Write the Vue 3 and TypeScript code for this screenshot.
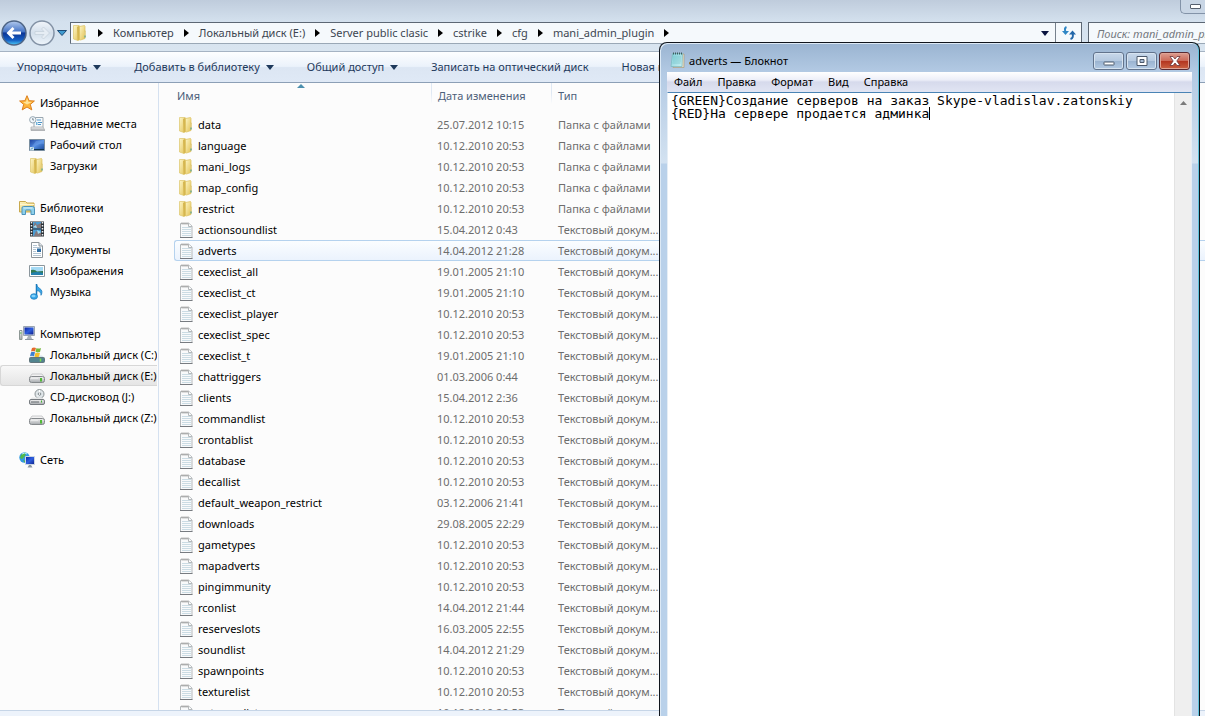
<script setup lang="ts">
import { computed, ref } from 'vue'

interface NavItem { label: string; icon: string; current?: boolean }
interface NavGroup extends NavItem { children: NavItem[] }
interface FileRow { name: string; date: string; folder?: boolean }

const crumbs = ['Компьютер', 'Локальный диск (E:)', 'Server public clasic', 'cstrike', 'cfg', 'mani_admin_plugin']

const commands = [
  { label: 'Упорядочить', menu: true },
  { label: 'Добавить в библиотеку', menu: true },
  { label: 'Общий доступ', menu: true },
  { label: 'Записать на оптический диск', menu: false },
  { label: 'Новая папка', menu: false },
]

const groups: NavGroup[] = [
  {
    label: 'Избранное', icon: 'star', children: [
      { label: 'Недавние места', icon: 'recent' },
      { label: 'Рабочий стол', icon: 'desktop' },
      { label: 'Загрузки', icon: 'folder' },
    ],
  },
  {
    label: 'Библиотеки', icon: 'library', children: [
      { label: 'Видео', icon: 'video' },
      { label: 'Документы', icon: 'document' },
      { label: 'Изображения', icon: 'picture' },
      { label: 'Музыка', icon: 'music' },
    ],
  },
  {
    label: 'Компьютер', icon: 'computer', children: [
      { label: 'Локальный диск (C:)', icon: 'system' },
      { label: 'Локальный диск (E:)', icon: 'drive', current: true },
      { label: 'CD-дисковод (J:)', icon: 'cd' },
      { label: 'Локальный диск (Z:)', icon: 'drive' },
    ],
  },
  { label: 'Сеть', icon: 'network', children: [] },
]

const files: FileRow[] = [
  { name: 'data', date: '25.07.2012 10:15', folder: true },
  { name: 'language', date: '10.12.2010 20:53', folder: true },
  { name: 'mani_logs', date: '10.12.2010 20:53', folder: true },
  { name: 'map_config', date: '10.12.2010 20:53', folder: true },
  { name: 'restrict', date: '10.12.2010 20:53', folder: true },
  { name: 'actionsoundlist', date: '15.04.2012 0:43' },
  { name: 'adverts', date: '14.04.2012 21:28' },
  { name: 'cexeclist_all', date: '19.01.2005 21:10' },
  { name: 'cexeclist_ct', date: '19.01.2005 21:10' },
  { name: 'cexeclist_player', date: '10.12.2010 20:53' },
  { name: 'cexeclist_spec', date: '10.12.2010 20:53' },
  { name: 'cexeclist_t', date: '19.01.2005 21:10' },
  { name: 'chattriggers', date: '01.03.2006 0:44' },
  { name: 'clients', date: '15.04.2012 2:36' },
  { name: 'commandlist', date: '10.12.2010 20:53' },
  { name: 'crontablist', date: '10.12.2010 20:53' },
  { name: 'database', date: '10.12.2010 20:53' },
  { name: 'decallist', date: '10.12.2010 20:53' },
  { name: 'default_weapon_restrict', date: '03.12.2006 21:41' },
  { name: 'downloads', date: '29.08.2005 22:29' },
  { name: 'gametypes', date: '10.12.2010 20:53' },
  { name: 'mapadverts', date: '10.12.2010 20:53' },
  { name: 'pingimmunity', date: '10.12.2010 20:53' },
  { name: 'rconlist', date: '14.04.2012 21:44' },
  { name: 'reserveslots', date: '16.03.2005 22:55' },
  { name: 'soundlist', date: '14.04.2012 21:29' },
  { name: 'spawnpoints', date: '10.12.2010 20:53' },
  { name: 'texturelist', date: '10.12.2010 20:53' },
  { name: 'voterconlist', date: '10.12.2010 20:53' },
]

const selected = ref('adverts')
const search = ref('')
const menus = ['Файл', 'Правка', 'Формат', 'Вид', 'Справка']
const text = ref('{GREEN}Создание серверов на заказ Skype-vladislav.zatonskiy\n{RED}На сервере продается админка')

const caret = computed(() => {
  const lines = text.value.split('\n')
  return { left: `${lines[lines.length - 1].length}ch`, top: `${(lines.length - 1) * 13}px` }
})
</script>

<template>
  <div class="desktop">
    <svg class="defs" aria-hidden="true">
      <defs>
        <linearGradient id="gold" x1="0" x2="1" y1="0" y2="1">
          <stop offset="0" stop-color="#fdf5c4" /><stop offset="1" stop-color="#e2c256" />
        </linearGradient>
        <linearGradient id="screen" x1="0" x2="1" y1="0" y2="1">
          <stop offset="0" stop-color="#0a1f9c" /><stop offset=".5" stop-color="#2f5fe0" /><stop offset="1" stop-color="#0d1f88" />
        </linearGradient>
        <linearGradient id="desk" x1="0" x2="1" y1="0" y2="1">
          <stop offset="0" stop-color="#1c3f9c" /><stop offset=".5" stop-color="#4f8ae0" /><stop offset="1" stop-color="#1d4591" />
        </linearGradient>
        <linearGradient id="metal" x1="0" x2="0" y1="0" y2="1">
          <stop offset="0" stop-color="#f4f4f4" /><stop offset="1" stop-color="#a5a9ad" />
        </linearGradient>
        <linearGradient id="orb" x1="0" x2="0" y1="0" y2="1">
          <stop offset="0" stop-color="#b4cbee" /><stop offset=".45" stop-color="#4474c6" />
          <stop offset=".5" stop-color="#0b3596" /><stop offset=".8" stop-color="#1560c4" /><stop offset="1" stop-color="#4fd0fa" />
        </linearGradient>
        <linearGradient id="orb-off" x1="0" x2="0" y1="0" y2="1">
          <stop offset="0" stop-color="#f1f5fa" /><stop offset=".5" stop-color="#d3dfeb" /><stop offset="1" stop-color="#eef5fb" />
        </linearGradient>
        <linearGradient id="page" x1="0" x2="1" y1="0" y2="1">
          <stop offset="0" stop-color="#7ecfd8" /><stop offset="1" stop-color="#c9eff2" />
        </linearGradient>
      </defs>
      <symbol id="i-folder" viewBox="0 0 16 16">
        <path d="M1.500.500h5.500l1 1v13l-2 1-4.500-1.500z" fill="url(#gold)" stroke="#dcc56c" stroke-width=".7" />
        <path d="M5 2l2.500-1.500v14L5.500 15.500z" fill="#d5b650" />
        <path d="M7.500 1.500L12.500.500l.5 1v12l-4.500 1.500-1-.5z" fill="url(#gold)" stroke="#dcc05c" stroke-width=".7" />
        <path d="M12.500 6h1v6h-1z" fill="#f7f1ca" stroke="#cfb04a" stroke-width=".4" /><path d="M13 10.500v2" stroke="#3b9c9c" />
      </symbol>
      <symbol id="i-text" viewBox="0 0 16 16">
        <path d="M2.500 1.500h8.500l3 2.500v11.500H2.500z" fill="#f9fafb" stroke="#b3b8bb" />
        <path d="M4 5.500h9M4 7.500h9M4 9.500h9M4 11.500h9M4 13.500h9" stroke="#cbdce4" />
        <path d="M3 2.500l1-2 1 2 1-2 1 2 1-2 1 2 1-2 1 2" fill="none" stroke="#a9a9a9" stroke-width=".8" />
        <path d="M10.500 1.500v3H14" fill="#fff" stroke="#b5b9bb" /><path d="M2 15.500h12.500" stroke="#777b80" />
      </symbol>
      <symbol id="i-star" viewBox="0 0 16 16">
        <path d="M8 .700l2.100 5 5.300.300-4.100 3.400 1.500 5.500L8 12l-4.800 2.900 1.500-5.500L.600 6l5.300-.300z" fill="#fdb53a" stroke="#dc7f1e" />
        <path d="M8 3l1.300 3.700 3.700.300-5 2.500-4-2.500 3-.300z" fill="#ffe397" />
      </symbol>
      <symbol id="i-recent" viewBox="0 0 16 16">
        <path d="M6 1.500h8v10H5V6z" fill="#f7fafc" stroke="#9aa7b0" />
        <path d="M8 4h4M9 6.500h4M9 8.500h3" stroke="#4d94c8" /><path d="M7 6h1.500v3H7z" fill="#72b4dc" />
        <path d="M2 11h12l2 3.500H2z" fill="url(#metal)" stroke="#a5a8aa" stroke-width=".7" />
        <circle cx="3.800" cy="3.800" r="3.200" fill="#f1f6fa" stroke="#98a8b3" /><path d="M3.800 2v2H5" fill="none" stroke="#63737d" stroke-width=".8" />
      </symbol>
      <symbol id="i-desktop" viewBox="0 0 16 16">
        <path d="M.500 2.500h15v11H.500z" fill="url(#desk)" stroke="#7a8ea0" /><path d="M1 12l6-8 8-1v4c-5-1-9 1-12 6z" fill="#7aaaf0" opacity=".4" />
        <path d="M1 12.500h14" stroke="#0c3353" /><path d="M1 10h4v3.500H1z" fill="#d1e4ef" /><path d="M2 12.500l2-2" stroke="#287cac" />
      </symbol>
      <symbol id="i-library" viewBox="0 0 16 16">
        <path d="M.500 3V1.500h6L8 3h7v9H.500z" fill="url(#gold)" stroke="#c8a94e" /><path d="M1 4.500h14" stroke="#fff6cf" />
        <path d="M3 14.500V8q0-1.500 1.500-1.500h9Q15.500 6.500 15.500 8.500v6H12V11q0-1-1-1H7.500q-1 0-1 1v3.500z" fill="#8fd0ea" stroke="#4c93bb" />
        <path d="M4.500 8h9" stroke="#d9f3fb" />
      </symbol>
      <symbol id="i-video" viewBox="0 0 16 16">
        <path d="M1 .500h14v15H1z" fill="#2b3137" /><path d="M4 1h8v6.500H4zM4 8.500h8V15H4z" fill="#4b9cd3" />
        <path d="M6 1l2 3 4-2v5H8L4 6zM5 15l2-5 5 2v3z" fill="#9c6a57" opacity=".7" /><path d="M4 6l3-2 1 3zM8 9l4 2-3 2z" fill="#9fddf5" />
        <path d="M2.500 1v15M13.500 1v15" stroke="#eef1f3" stroke-width="1.500" stroke-dasharray="1.500 1.500" />
      </symbol>
      <symbol id="i-document" viewBox="0 0 16 16">
        <path d="M2.500.500H10L13.500 4v11.500h-11z" fill="#fff" stroke="#8d9499" /><path d="M10 .500V4h3.500" fill="#dce4ea" stroke="#8d9499" />
        <path d="M4 3.500h4M4 5.500h8M4 7.500h3M4 9.500h3M4 11.500h8M4 13.500h8" stroke="#a1b6c7" stroke-width=".8" /><path d="M8 6.500h4V10H8z" fill="#2e6da4" />
      </symbol>
      <symbol id="i-picture" viewBox="0 0 16 16">
        <path d="M.500 2.500h15v11H.500z" fill="#fff" stroke="#8b969d" /><path d="M2 4h12v8H2z" fill="#a5daf5" />
        <path d="M2 7q4-1 6 1.500l6-.5v2H2z" fill="#327a53" /><path d="M2 10q6-2 12 0v2H2z" fill="#2380ad" />
      </symbol>
      <symbol id="i-music" viewBox="0 0 16 16">
        <path d="M7.500 0v11.500" stroke="#1776b8" stroke-width="1.500" />
        <path d="M7.500.300q.5 2.500 3 4 4 2.500 1.500 7 .3-4-4.500-4.800z" fill="#37a6e8" stroke="#1776b8" stroke-width=".7" />
        <ellipse cx="5" cy="12.500" rx="3.500" ry="2.800" fill="#37a6e8" stroke="#1776b8" stroke-width=".7" /><ellipse cx="4.500" cy="12" rx="2" ry="1.200" fill="#83d1fb" />
      </symbol>
      <symbol id="i-computer" viewBox="0 0 16 16">
        <path d="M.500 4.500H3v9H.500z" fill="url(#metal)" stroke="#8d9794" /><path d="M1 7h1.500" stroke="#4db84b" />
        <path d="M4.500.500h11v9h-11z" fill="#d7dde4" stroke="#9aa5b1" /><path d="M5.500 1.500h9v7h-9z" fill="url(#screen)" />
        <path d="M9 10h3l1 3H7.500z" fill="#aab2bb" /><path d="M6 13.500h8.500" stroke="#8d969f" />
      </symbol>
      <symbol id="i-drive" viewBox="0 0 16 16">
        <path d="M3 6h10l2.500 3.500H.500z" fill="#f2f2f2" stroke="#c0c2c4" stroke-width=".8" />
        <rect x=".500" y="8.500" width="15" height="6" rx="2" fill="url(#metal)" stroke="#85898c" /><path d="M11 10h2v3.500h-2z" fill="#52bb38" />
        <path d="M2 10.500h7" stroke="#e9eaeb" />
      </symbol>
      <symbol id="i-system" viewBox="0 0 16 16">
        <path d="M3 8.500h10l2.500 2.500H.500z" fill="#d6e6eb" /><rect x=".500" y="10.500" width="15" height="5" rx="1" fill="#52848f" stroke="#61757c" />
        <path d="M11.500 11.500v3" stroke="#79dc4b" stroke-width="1.500" />
        <path d="M3 1q2-1 4 0L6 4.500Q4 3.500 2 4.500z" fill="#e56a2c" /><path d="M7.500 1q2 1 4.500 0l-1 4q-2.500 1-4.500-.200z" fill="#76b83b" />
        <path d="M2 5.300q2-1 4 0l-1 4q-2-1-4 0z" fill="#3b7fd1" /><path d="M6.500 5.500q2 1 4.500.200l-1 4q-2.500.700-4.500-.300z" fill="#f4bd2b" />
      </symbol>
      <symbol id="i-cd" viewBox="0 0 16 16">
        <circle cx="10.500" cy="5" r="4.500" fill="#dfe5e8" stroke="#8d9497" /><circle cx="10.500" cy="5" r="1.300" fill="#fff" stroke="#828b8f" />
        <path d="M10.500 1v2.500M8 7.500l1.500-1.500" stroke="#fff" /><path d="M3 8.500h10l2.500 2.500H.500z" fill="#e6e7e8" />
        <rect x=".500" y="10.500" width="15" height="5" rx="1.500" fill="url(#metal)" stroke="#777c80" /><path d="M2 13h8" stroke="#666c70" /><path d="M12.500 11.500v2" stroke="#45b234" />
      </symbol>
      <symbol id="i-network" viewBox="0 0 16 16">
        <circle cx="5.500" cy="5.500" r="5.200" fill="#329ae3" /><path d="M2 3q3-3 5-2L6 4 3 7 1 6zM4 8l3 1-1 2z" fill="#52b848" /><path d="M3 2q3-2 5 0" stroke="#b9f0fa" fill="none" />
        <path d="M6.500 4.500h9v8h-9z" fill="url(#screen)" stroke="#cdd7e2" /><path d="M10 13h2l1.500 2.500h-5z" fill="#8c98a3" />
      </symbol>
      <symbol id="i-notepad" viewBox="0 0 16 16">
        <path d="M3 2h11v13.500H3z" fill="#e5dfc8" stroke="#a99c80" stroke-width=".7" /><path d="M2.500 1.500h10L12 14.500H1z" fill="url(#page)" stroke="#79b7be" stroke-width=".7" />
        <path d="M3 5h8M3 7h8M3 9h8M2.500 11h8" stroke="#71bfc6" stroke-width=".6" /><path d="M3 1.500h10" stroke="#3d5b5f" stroke-width="2" stroke-dasharray="1 1" />
      </symbol>
    </svg>

    <header class="glass">
      <div class="caption"><button class="min-button" aria-label="Свернуть проводник"><i class="dash"></i></button></div>
      <div class="nav-row">
        <nav class="travel" aria-label="Переходы">
          <button class="round" aria-label="Назад">
            <svg viewBox="0 0 26 26"><circle cx="13" cy="13" r="12" fill="url(#orb)" stroke="#4e6585" stroke-width="1.500" /><path d="M5.500 13l6-6 2 2-2.500 2.500h9v3h-9l2.500 2.500-2 2z" fill="#fff" /></svg>
          </button>
          <button class="round" aria-label="Вперёд">
            <svg viewBox="0 0 26 26"><circle cx="13" cy="13" r="12" fill="url(#orb-off)" stroke="#8392a5" stroke-width="1.500" /><path d="M20.500 13l-6-6-2 2 2.500 2.500H6v3h9l-2.500 2.500 2 2z" fill="#e6edf4" stroke="#c3ced9" stroke-width=".7" /></svg>
          </button>
          <button class="recent" aria-label="Последние страницы"><svg viewBox="0 0 10 6"><path d="M.500.500h9L5 5.500z" fill="#3f9bd0" stroke="#1c4b75" /></svg></button>
        </nav>
        <div class="address">
          <svg class="icon"><use href="#i-folder" /></svg>
          <ol class="crumbs">
            <li v-for="crumb in crumbs" :key="crumb"><svg class="sep" viewBox="0 0 5 8"><path d="M0 0l5 4-5 4z" /></svg><a href="#">{{ crumb }}</a></li>
            <li><svg class="sep" viewBox="0 0 5 8"><path d="M0 0l5 4-5 4z" /></svg></li>
          </ol>
          <button class="history" aria-label="Предыдущие расположения"><svg viewBox="0 0 8 5"><path d="M0 0h8L4 5z" fill="#0a1440" /></svg></button>
          <button class="refresh" aria-label="Обновить">
            <svg viewBox="0 0 16 14"><path d="M5.500 1Q3 2 4.500 6" fill="none" stroke="#2f86c5" stroke-width="2" /><path d="M1 5h7l-3.500 4z" fill="#2f86c5" /><path d="M9.500 13q3.500-1 2-6" fill="none" stroke="#2367a9" stroke-width="2" /><path d="M8 8.500h7L11.500 4.500z" fill="#2367a9" /></svg>
          </button>
        </div>
        <input v-model="search" class="search" type="text" aria-label="Поиск" placeholder="Поиск: mani_admin_plugin">
      </div>
    </header>

    <div class="commands">
      <button v-for="command in commands" :key="command.label">
        {{ command.label }}<svg v-if="command.menu" viewBox="0 0 8 5"><path d="M0 0h8L4 5z" fill="#1e395b" /></svg>
      </button>
    </div>

    <div class="body">
      <aside class="sidebar">
        <ul v-for="group in groups" :key="group.label">
          <li><a href="#"><svg class="icon"><use :href="`#i-${group.icon}`" /></svg>{{ group.label }}</a></li>
          <li v-for="item in group.children" :key="item.label" class="child" :class="{ current: item.current }">
            <a href="#"><svg class="icon"><use :href="`#i-${item.icon}`" /></svg><span>{{ item.label }}</span></a>
          </li>
        </ul>
      </aside>
      <main class="listing">
        <svg class="sort" viewBox="0 0 8 4"><path d="M4 0l4 4H0z" fill="#4c8fae" /></svg>
        <table>
          <colgroup><col class="c-name"><col class="c-date"><col></colgroup>
          <thead><tr><th>Имя</th><th>Дата изменения</th><th>Тип</th></tr></thead>
          <tbody>
            <tr v-for="file in files" :key="file.name" :class="{ selected: file.name === selected }" @click="selected = file.name">
              <td><span class="name"><svg class="icon"><use :href="file.folder ? '#i-folder' : '#i-text'" /></svg>{{ file.name }}</span></td>
              <td>{{ file.date }}</td>
              <td>{{ file.folder ? 'Папка с файлами' : 'Текстовый докум...' }}</td>
            </tr>
          </tbody>
        </table>
      </main>
    </div>
    <footer class="details"></footer>

    <section class="notepad" aria-label="Блокнот">
      <div class="title">
        <svg class="icon"><use href="#i-notepad" /></svg>
        <h1>adverts — Блокнот</h1>
        <div class="buttons">
          <button aria-label="Свернуть"><svg viewBox="0 0 12 10"><rect x="1" y="6" width="10" height="3" rx=".500" fill="#fff" stroke="#4b586b" /></svg></button>
          <button aria-label="Развернуть"><svg viewBox="0 0 12 10"><path d="M1 .500h10v9H1z" fill="#fff" stroke="#4b586b" /><path d="M4 3.500h4v3H4z" fill="#a9bdd6" stroke="#4b586b" /></svg></button>
          <button class="close" aria-label="Закрыть"><svg viewBox="0 0 12 10"><path d="M1 .500h3l2 2.500 2-2.500h3L7.800 5 11 9.500H8L6 7 4 9.500H1L4.200 5z" fill="#fff" stroke="#69343a" stroke-width=".8" /></svg></button>
        </div>
      </div>
      <div class="client">
        <div class="menubar"><button v-for="menu in menus" :key="menu">{{ menu }}</button></div>
        <div class="editor">
          <div class="paper">
            <textarea v-model="text" aria-label="Текст" spellcheck="false"></textarea>
            <div class="caret-layer"><i class="caret" :style="caret"></i></div>
          </div>
          <div class="scroll"><button aria-label="Вверх"><svg viewBox="0 0 7 4"><path d="M3.500 0L7 4H0z" fill="#7b7b7b" /></svg></button></div>
        </div>
      </div>
    </section>
  </div>
</template>

<style>
body { margin: 0; overflow: hidden; }
</style>

<style scoped>
.desktop {
  position: relative;
  display: flex;
  flex-direction: column;
  height: 100vh;
  overflow: hidden;
  background: #fcfcfc;
  color: #000;
  font: 11px/16px "Noto Sans", "Open Sans", sans-serif;
}
.desktop *, .desktop *::before { box-sizing: border-box; }
.defs { position: absolute; width: 0; height: 0; }
button { display: flex; align-items: center; margin: 0; padding: 0; border: 0; background: none; color: inherit; font: inherit; white-space: nowrap; }
a { color: inherit; text-decoration: none; }
ul, ol { margin: 0; padding: 0; list-style: none; }
.icon { flex: none; width: 16px; height: 16px; }

.glass { flex: none; background: linear-gradient(#bfccdc, #d4e1ee 22px, #d9e5f0); }
.caption { display: flex; justify-content: flex-end; height: 22px; }
.min-button { justify-content: center; width: 25px; height: 14px; padding-left: 4px; border: 1px solid #8393a8; border-width: 0 0 1px 1px; border-radius: 0 0 0 5px; background: #c9d6e5; }
.dash { width: 11px; height: 5px; border: 1px solid #555f6e; border-radius: 1px; background: #fff; }
.nav-row { display: flex; height: 29px; align-items: flex-start; }
.travel { display: flex; flex: none; align-items: center; gap: 2px; width: 70px; height: 22px; padding-left: 1px; }
.round svg { display: block; width: 26px; height: 26px; }
.recent svg { width: 10px; height: 6px; }
.address { display: flex; flex: 1; min-width: 0; height: 22px; border: 1px solid #5c6774; background: #f5f9fc; border-bottom-color: #9aa8b6; }
.address > .icon { margin: 2px 0 0 1px; }
.crumbs { display: flex; flex: 1; min-width: 0; align-items: center; overflow: hidden; color: #3c4550; white-space: nowrap; }
.crumbs li { display: flex; align-items: center; }
.sep { width: 5px; height: 8px; margin: 0 10px; }
.history { justify-content: center; width: 20px; }
.history svg { width: 8px; height: 5px; }
.refresh { justify-content: center; width: 26px; border-left: 1px solid #76818d; }
.refresh svg { width: 16px; height: 14px; }
.search { flex: none; width: 117px; height: 22px; margin-left: 6px; padding: 0 0 0 8px; border: 1px solid #5c6774; border-right: 0; border-bottom-color: #9aa8b6; border-radius: 0; outline: 0; background: #f5f9fc; color: #333; font: italic 11px/16px "Noto Sans", "Open Sans", sans-serif; }
.search::placeholder { color: #73777c; opacity: 1; }

.commands { display: flex; flex: none; gap: 33px; height: 32px; padding-left: 17px; overflow: hidden; border-top: 1px solid #a5b3c3; border-bottom: 1px solid #8c9fb6; background: linear-gradient(#fdfeff, #ebf2fb 48%, #dce6f3 52%, #dfe9f6); color: #1e395b; }
.commands svg { width: 8px; height: 5px; margin-left: 6px; }

.body { display: flex; flex: 1; min-height: 0; }
.sidebar { flex: none; width: 159px; padding-top: 9px; border-right: 1px solid #d5e1f0; overflow: hidden; }
.sidebar ul { margin-bottom: 21px; padding-right: 1px; }
.sidebar li { height: 21px; padding-left: 19px; overflow: hidden; white-space: nowrap; }
.sidebar .child { padding-left: 29px; }
.sidebar li a { display: flex; align-items: center; gap: 5px; height: 21px; }
.sidebar .current { padding-left: 28px; border: 1px solid #d7d7d7; border-right: 0; border-radius: 3px 0 0 3px; background: linear-gradient(#f8f8f8, #e5e5e5); }
.sidebar .current a { height: 19px; }

.listing { position: relative; flex: 1; min-width: 0; padding-left: 15px; overflow: hidden; }
.sort { position: absolute; top: 1px; left: 138px; width: 8px; height: 4px; }
table { width: 100%; table-layout: fixed; border-collapse: separate; border-spacing: 0; }
.c-name { width: 257px; }
.c-date { width: 120px; }
th { height: 31px; padding: 0 0 5px 7px; color: #4c607a; font-weight: 400; text-align: left; background: linear-gradient(#dfe8f3, #dfe8f3 10px, #fcfcfc) left top / 1px 21px no-repeat; }
th:first-child { padding-left: 3px; background: none; }
td { height: 21px; padding: 0 0 0 6px; border: 0 solid #b5d2ee; color: #6d6d6d; white-space: nowrap; }
td:first-child { padding-left: 4px; color: #000; }
td:last-child { padding-left: 7px; }
.name { display: flex; align-items: center; gap: 4px; }
.selected td { border-width: 1px 0; background: linear-gradient(#fbfdff, #ebf3fd); }
.selected td:first-child { padding-left: 3px; border-left-width: 1px; border-radius: 3px 0 0 3px; }
.details { flex: none; height: 6px; border-top: 1px solid #c6d5e7; background: #edf3fb; }

.notepad {
  position: absolute;
  top: 42px;
  right: 5px;
  bottom: 0;
  left: 659px;
  display: flex;
  flex-direction: column;
  padding: 0 7px;
  border: 1px solid #10151c;
  border-bottom: 0;
  border-radius: 8px 8px 0 0;
  background: linear-gradient(#9ab4d1, #b3cae4 30px, #cfdfef 110px, #d3e2f1 120px, #b9d1ea 121px);
  box-shadow: inset 1px 1px #dce9f5, inset -1px 0 #5fc3dc;
}
.title { display: flex; flex: none; align-items: flex-start; height: 29px; padding: 0 2px 0 3px; }
.title .icon { margin-top: 9px; }
.title h1 { flex: 1; margin: 10px 0 0 3px; font-size: 11px; line-height: 16px; font-weight: 400; white-space: nowrap; }
.buttons { display: flex; gap: 2px; padding-top: 9px; }
.buttons button { justify-content: center; width: 31px; height: 18px; border: 1px solid #62738c; border-radius: 3px; background: linear-gradient(#c8d8ea, #b5c9e0 48%, #9bb4d1 52%, #b3cae4); box-shadow: inset 0 0 0 1px #d6e3f0; }
.buttons .close { border-color: #5a2a32; background: linear-gradient(#dd9c90, #cc6a59 48%, #b43520 52%, #cb6243); box-shadow: inset 0 0 0 1px #e0a496; }
.buttons svg { width: 12px; height: 10px; }
.client { display: flex; flex: 1; flex-direction: column; min-height: 0; background: #fff; }
.menubar { display: flex; flex: none; gap: 15px; height: 20px; padding-left: 7px; background: linear-gradient(#fff, #eceef8 40%, #d6daec 50%, #e1e5f3); }
.editor { display: flex; flex: 1; min-height: 0; border: 1px solid #4a84b5; border-width: 1px 1px 0; border-right-color: #e5eef6; border-left-color: #e5eef6; }
.paper { position: relative; flex: 1; min-width: 0; }
textarea { display: block; width: 100%; height: 100%; margin: 0; padding: 1px 0 0 3px; border: 0; outline: 0; resize: none; overflow: hidden; background: none; color: #000; font: 13px/13px "DejaVu Sans Mono", monospace; }
.caret-layer { position: absolute; top: 1px; left: 3px; font: 13px/13px "DejaVu Sans Mono", monospace; pointer-events: none; }
.caret { position: absolute; width: 1px; height: 13px; background: #000; }
.scroll { flex: none; width: 17px; border-left: 1px solid #e3e3e3; background: #efefef; }
.scroll button { justify-content: center; width: 100%; height: 20px; }
.scroll svg { width: 7px; height: 4px; }
</style>
